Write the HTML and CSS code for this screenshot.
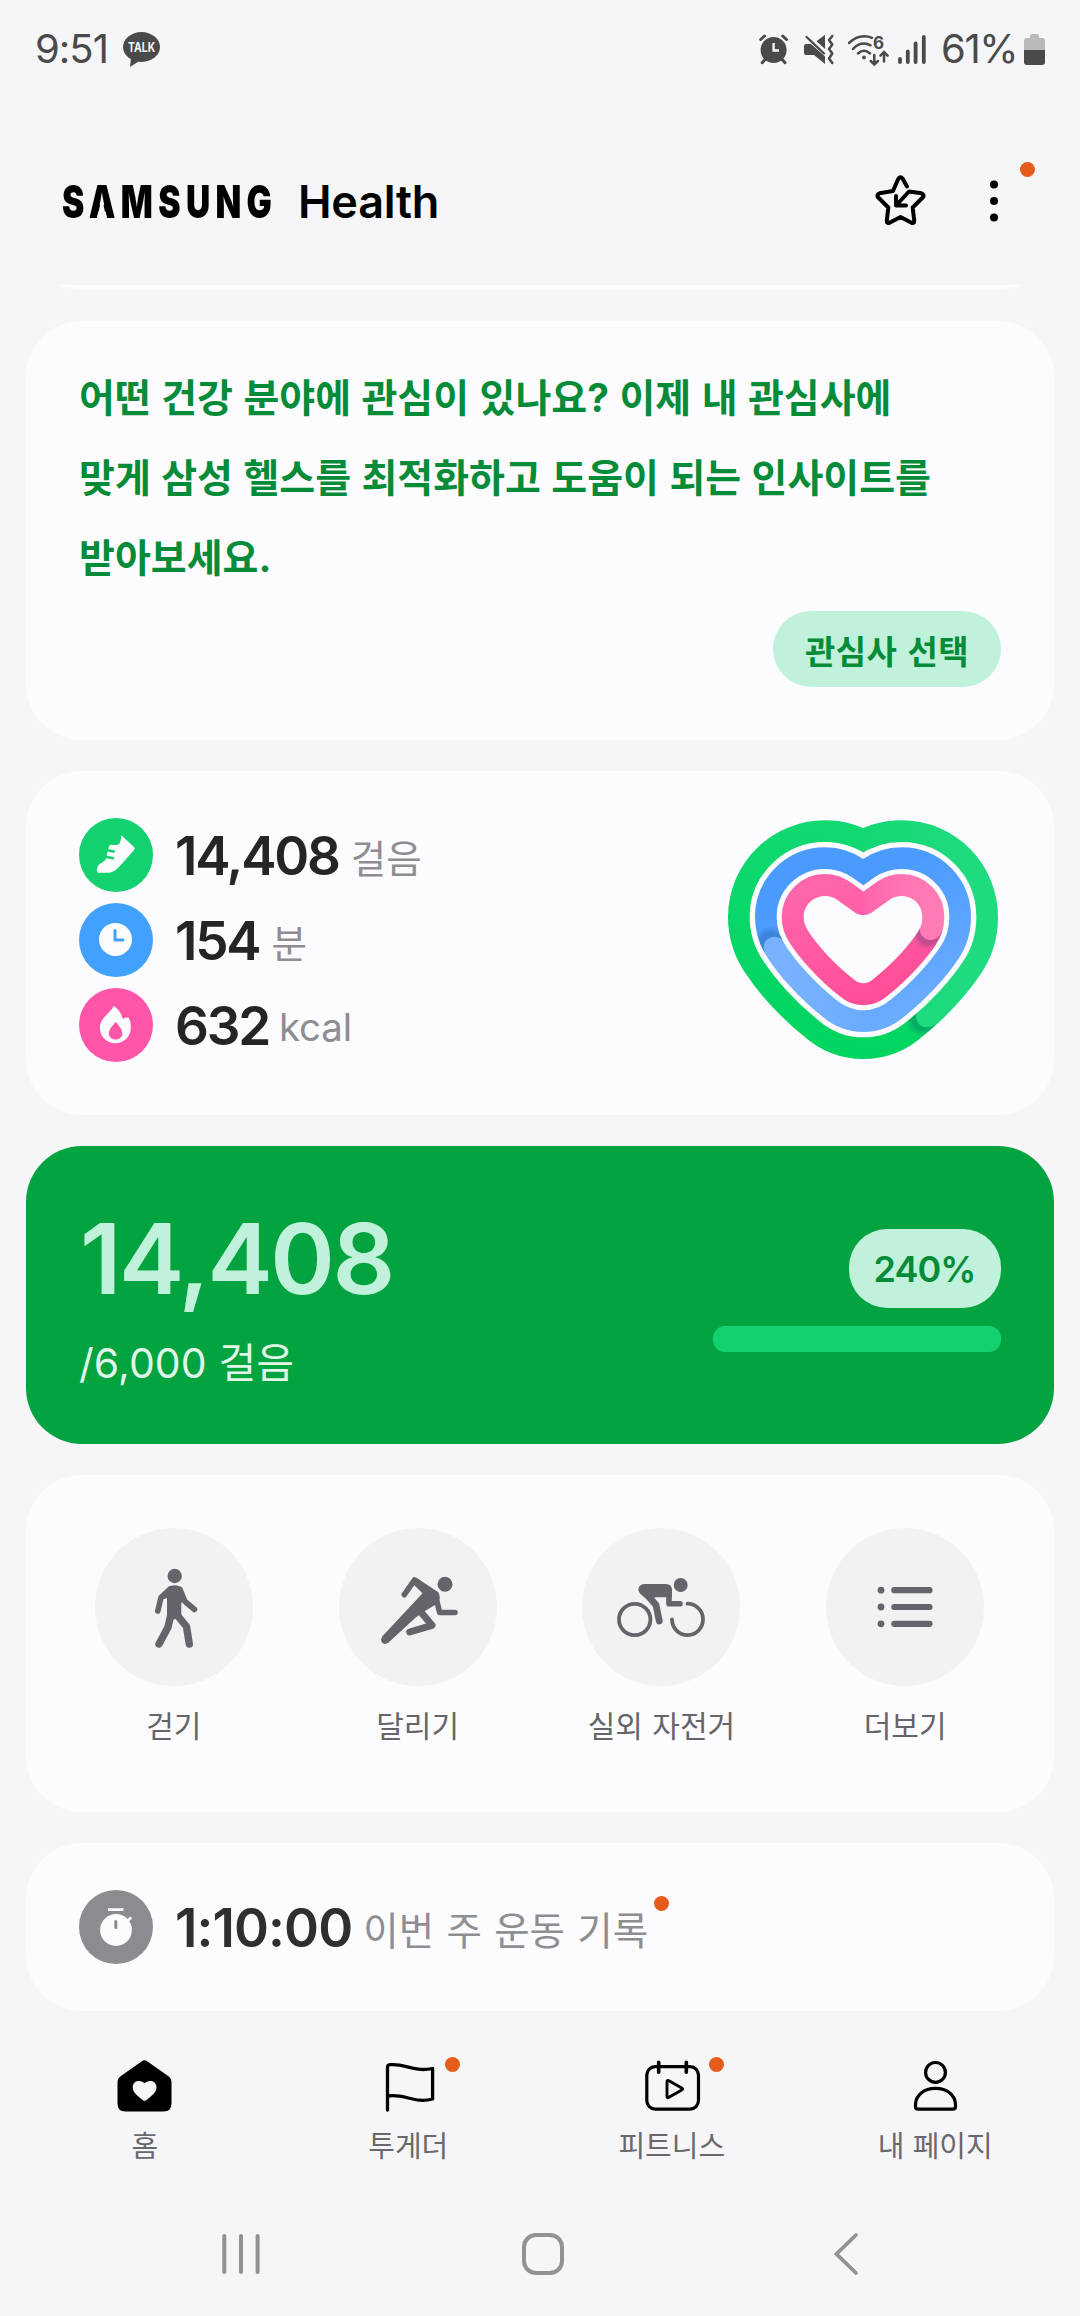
FILE: index.html
```html
<!DOCTYPE html>
<html lang="ko">
<head>
<meta charset="utf-8">
<meta name="viewport" content="width=device-width, initial-scale=1">
<title>Samsung Health</title>
<link rel="stylesheet" href="styles.css">
</head>
<body>
<div class="status-bar">
  <div class="status-left">
    <span class="status-time">9:51</span>
    <svg class="talk" width="37" height="36" viewBox="0 0 37 36">
      <ellipse cx="18.5" cy="15" rx="18.5" ry="15" fill="#4a4a4a"/>
      <path d="M8 26L7 35L17 28.5Z" fill="#4a4a4a"/>
      <text x="18.6" y="20" text-anchor="middle" textLength="27" lengthAdjust="spacingAndGlyphs" class="talk-text">TALK</text>
    </svg>
  </div>
  <div class="status-right">
    <svg class="ico-alarm" width="30" height="31" viewBox="0 0 30 31" fill="none" stroke="#4a4a4a" stroke-width="3" stroke-linecap="round">
      <circle cx="14.6" cy="16" r="13" fill="#4a4a4a" stroke="none"/>
      <path d="M1.7 5.5L5.5 2M27.5 5.5L23.7 2M3.2 28.7L6 25.5M26 28.7L23.2 25.5"/>
      <path d="M14.6 9V16.5H20" stroke="#f6f6f8" stroke-width="2.3" stroke-linecap="butt"/>
    </svg>
    <svg class="ico-mute" width="31" height="31" viewBox="0 0 31 31" fill="#4a4a4a">
      <path d="M2 10H7L21 22.5V30L10 21H2Q0 21 0 19V12Q0 10 2 10Z"/>
      <path d="M12.5 7.3L21 .7V15Z"/>
      <path d="M2.6 3L20 19.5" stroke="#4a4a4a" stroke-width="2.4" stroke-linecap="round"/>
      <path d="M28.3 2L25 6L28.3 10.5L25 15L28.3 19.5L25 24.5L28.3 29" fill="none" stroke="#4a4a4a" stroke-width="2.5" stroke-linecap="round" stroke-linejoin="round"/>
    </svg>
    <svg class="ico-wifi" width="42" height="33" viewBox="0 0 42 33" fill="none" stroke="#4a4a4a" stroke-width="2.5" stroke-linecap="round">
      <path d="M1 9Q8 2.2 16 2.2Q20.5 2.2 24 3.8M5 15Q10 9.6 16 9.6Q19.5 9.6 22.5 11.3M10 19.5Q13 16.8 16 16.8Q19 16.8 22 19.5"/>
      <circle cx="16" cy="23.5" r="1.9" fill="#4a4a4a" stroke="none"/>
      <path d="M26.3 21V30M22.7 27L26.3 30.6L29.9 27M36 27.5V18.5M32.4 21.7L36 18.1L39.6 21.7"/>
      <text x="25" y="15" class="wifi-text">6</text>
    </svg>
    <svg class="ico-signal" width="29" height="31" viewBox="0 0 29 31" stroke="#4a4a4a" stroke-width="3.8" stroke-linecap="round">
      <path d="M2 25V28M9.8 17.5V28M17.6 9.5V28M25.8 3V28"/>
    </svg>
    <span class="status-percent">61%</span>
    <svg class="ico-battery" width="21" height="32" viewBox="0 0 21 32">
      <path d="M6 4V2Q6 0 8 0H13Q15 0 15 2V4H18.5Q21 4 21 7V16H0V7Q0 4 2.500 4Z" fill="#b9b9bb"/>
      <path d="M0 16H21V28Q21 31 18 31H3Q0 31 0 28Z" fill="#4a4a4a"/>
    </svg>
  </div>
</div>

<header class="app-header">
  <h1 class="logo"><span class="brand">S<span class="brand-a">A</span>MSUNG</span><span class="product">Health</span></h1>
  <div class="header-actions">
    <svg width="58" height="58" viewBox="0 0 58 58" fill="none" stroke="#000" stroke-width="4" stroke-linecap="round" stroke-linejoin="round">
      <path d="M35 14.500L30.700 6.800Q28.500 3.600 26.300 6.800L21 19L7.500 21.300Q4 22.500 6.300 25.500L16.300 35.500L14.800 48.500Q14.500 52 17.500 50.800L28.500 45L39.500 50.800Q42.500 52 42.200 48.500L40.700 35.500L50.700 25.500Q53 22.500 49.500 21.300L37 19.500L24.500 33M24 24V33.500H34"/>
    </svg>
    <div class="more">
      <svg width="10" height="44" viewBox="0 0 10 44"><circle cx="5" cy="5.500" r="4"/><circle cx="5" cy="22" r="4"/><circle cx="5" cy="38.500" r="4"/></svg>
      <span class="badge badge-more"></span>
    </div>
  </div>
</header>

<main class="feed">
  <div class="previous-card"></div>

  <section class="card interest">
    <p class="interest-text">어떤 건강 분야에 관심이 있나요? 이제 내 관심사에<br>맞게 삼성 헬스를 최적화하고 도움이 되는 인사이트를<br>받아보세요.</p>
    <button class="interest-button">관심사 선택</button>
  </section>

  <section class="card activity">
    <ul class="stats">
      <li class="stat">
        <svg width="74" height="74" viewBox="0 0 74 74">
          <circle cx="37" cy="37" r="37" fill="#13d16f"/>
          <path d="M42.300 17.300L55.200 29.300Q56.200 30.500 55 32L40.500 48.500Q35 54.800 28 54.800H20Q17.600 54.800 17.800 51.500Q18.500 46.500 23 44.500L26.500 42L28.500 34L30 28.500Q30.300 26.500 32.500 26.800Q39.500 28 41 24.500Q42.300 21.500 42.300 17.300Z" fill="#fcfcfe"/>
          <path d="M28 32.200L34.800 33.500M26.500 38.800L34 40.200" stroke="#13d16f" stroke-width="2.400" stroke-linecap="round"/>
        </svg>
        <span class="value">14,408</span><span class="unit">걸음</span>
      </li>
      <li class="stat">
        <svg width="74" height="74" viewBox="0 0 74 74" fill="none">
          <circle cx="37" cy="37" r="37" fill="#42a0ff"/>
          <circle cx="36.500" cy="36.400" r="16.500" fill="#fcfcfe"/>
          <path d="M36 27.500V37H44" stroke="#42a0ff" stroke-width="3" stroke-linecap="round" stroke-linejoin="round"/>
        </svg>
        <span class="value">154</span><span class="unit">분</span>
      </li>
      <li class="stat">
        <svg width="74" height="74" viewBox="0 0 74 74">
          <circle cx="37" cy="37" r="37" fill="#ff55a8"/>
          <path d="M34.800 18C39 20.500 42.500 25.500 43.800 30.800Q46.500 29.500 49.500 29.500Q51.900 33 51.900 39C51.900 48.500 45 55.200 36.400 55.200C27.800 55.200 20.900 48.500 20.900 40C20.900 30.500 29.500 26.500 34.800 18Z" fill="#fcfcfe"/>
          <path d="M36.700 33.700C40 38 43.300 41 43.300 45.500C43.300 49 40.500 51.500 36.600 51.500C32.700 51.500 29.900 49 29.900 45.500C29.900 41 33.500 38 36.700 33.700Z" fill="#ff55a8"/>
        </svg>
        <span class="value">632</span><span class="unit unit-latin">kcal</span>
      </li>
    </ul>
    <svg class="rings" width="330" height="300" viewBox="0 0 990 900">
      <defs>
        <path id="heart" d="M490 376C482 376 475 374 468 370L411 329C401 322 389 318 375 318C340 318 311 346 311 381C311 396 316 411 326 425C350 462 400 520 460 567C470 576 480 580 490 580C500 580 510 576 520 567C580 520 630 462 654 425C664 411 667 396 667 381C667 346 640 318 605 318C591 318 579 322 569 329L512 370C505 374 498 376 490 376Z" stroke-linejoin="round"/>
        <linearGradient id="g1" gradientUnits="userSpaceOnUse" x1="300" y1="750" x2="450" y2="120"><stop offset="0" stop-color="#00d55f"/><stop offset="1" stop-color="#12d872"/></linearGradient>
        <linearGradient id="g2" gradientUnits="userSpaceOnUse" x1="490" y1="0" x2="800" y2="0"><stop offset="0" stop-color="#13d872"/><stop offset="1" stop-color="#1fdb80"/></linearGradient>
        <linearGradient id="b1" gradientUnits="userSpaceOnUse" x1="340" y1="330" x2="495" y2="726"><stop offset="0" stop-color="#4b9bff"/><stop offset="1" stop-color="#6bacff"/></linearGradient>
        <linearGradient id="b2" gradientUnits="userSpaceOnUse" x1="280" y1="0" x2="490" y2="0"><stop offset="0" stop-color="#77b1ff"/><stop offset="1" stop-color="#6bacff"/></linearGradient>
        <linearGradient id="p1" gradientUnits="userSpaceOnUse" x1="560" y1="600" x2="440" y2="270"><stop offset="0" stop-color="#ff4e98"/><stop offset="1" stop-color="#ff65aa"/></linearGradient>
        <linearGradient id="p2" gradientUnits="userSpaceOnUse" x1="480" y1="0" x2="680" y2="0"><stop offset="0" stop-color="#ff65aa"/><stop offset="1" stop-color="#ff7bb5"/></linearGradient>
        <radialGradient id="shade"><stop offset=".6" stop-color="#003060" stop-opacity=".24"/><stop offset="1" stop-color="#003060" stop-opacity="0"/></radialGradient>
        <clipPath id="cg"><path d="M490 0H990V783H780L683 679L600 590L490 470Z"/></clipPath>
        <clipPath id="cb"><path d="M100 541L222 471L320 415L490 650V900H100Z"/></clipPath>
        <clipPath id="cp"><path d="M490 200H800V444L692 419L600 398L490 420Z"/></clipPath>
        <mask id="mg" maskUnits="userSpaceOnUse" x="0" y="0" width="990" height="900"><use href="#heart" fill="#fff" stroke="#fff" stroke-width="454"/></mask>
        <mask id="mb" maskUnits="userSpaceOnUse" x="0" y="0" width="990" height="900"><use href="#heart" fill="#fff" stroke="#fff" stroke-width="292"/></mask>
        <mask id="mp" maskUnits="userSpaceOnUse" x="0" y="0" width="990" height="900"><use href="#heart" fill="#fff" stroke="#fff" stroke-width="132"/></mask>
      </defs>
      <g mask="url(#mg)">
        <rect width="990" height="900" fill="url(#g1)"/>
        <circle cx="668" cy="688" r="52" fill="url(#shade)"/>
        <rect width="990" height="900" fill="url(#g2)" clip-path="url(#cg)"/>
        <circle cx="681" cy="679" r="33" fill="#1fdb80"/>
      </g>
      <use href="#heart" fill="#fcfcfe" stroke="#fcfcfe" stroke-width="324"/>
      <g mask="url(#mb)">
        <rect width="990" height="900" fill="url(#b1)"/>
        <circle cx="214" cy="460" r="52" fill="url(#shade)"/>
        <rect width="990" height="900" fill="url(#b2)" clip-path="url(#cb)"/>
        <circle cx="223" cy="472" r="32" fill="#77b1ff"/>
      </g>
      <use href="#heart" fill="#fcfcfe" stroke="#fcfcfe" stroke-width="162"/>
      <g mask="url(#mp)">
        <rect width="990" height="900" fill="url(#p1)"/>
        <circle cx="686" cy="430" r="50" fill="url(#shade)"/>
        <rect width="990" height="900" fill="url(#p2)" clip-path="url(#cp)"/>
        <circle cx="692" cy="417" r="33" fill="#ff7bb5"/>
      </g>
      <use href="#heart" fill="#fcfcfe"/>
    </svg>
  </section>

  <section class="card steps">
    <div class="steps-count">
      <div class="steps-value">14,408</div>
      <div class="steps-goal">/6,000 걸음</div>
    </div>
    <div class="steps-progress">
      <div class="steps-percent">240%</div>
      <div class="bar"></div>
    </div>
  </section>

  <section class="card exercises">
    <div class="exercise">
      <svg width="158" height="158" viewBox="0 0 158 158" fill="none" stroke="#65646a" stroke-linecap="round" stroke-linejoin="round">
        <circle cx="79" cy="79" r="79" fill="#f2f2f2" stroke="none"/>
        <circle cx="79.700" cy="48" r="7.200" fill="#65646a" stroke="none"/>
        <path d="M74 59Q76 57.300 79.700 57.300Q85 57.300 87 61L91 71L86.300 75V88L78 92L72 86.500V70L66 72L65 68Z" fill="#65646a" stroke="none"/>
        <path d="M75 61L66 69.500L62.800 83M85 61.500L90 73.500L99.500 81.500" stroke-width="5.600"/>
        <path d="M76 86L73 99.300L64 116M82 87L91.500 98.500L94.300 116" stroke-width="7.400"/>
      </svg>
      <span>걷기</span>
    </div>
    <div class="exercise">
      <svg width="158" height="158" viewBox="0 0 158 158" fill="none" stroke="#65646a" stroke-linecap="round" stroke-linejoin="round">
        <circle cx="79" cy="79" r="79" fill="#f2f2f2" stroke="none"/>
        <circle cx="106" cy="56.300" r="7.500" fill="#65646a" stroke="none"/>
        <path d="M77 49.500L99 64Q101.500 67 100.300 72L98 76L93 78.800L86 83L77 89.300L49 115L42.700 109L83.500 65.300L74 56Z" fill="#65646a" stroke="none"/>
        <path d="M65.300 66.700L75.500 52L80 55M97 70L100.700 84.500H116" stroke-width="5.600"/>
        <path d="M81 83L93 97.300L70.700 104" stroke-width="7"/>
        <path d="M46 112L60 98" stroke-width="7.600"/>
      </svg>
      <span>달리기</span>
    </div>
    <div class="exercise">
      <svg width="158" height="158" viewBox="0 0 158 158" fill="none" stroke="#65646a" stroke-linecap="round" stroke-linejoin="round">
        <circle cx="79" cy="79" r="79" fill="#f2f2f2" stroke="none"/>
        <circle cx="98.700" cy="57" r="7" fill="#65646a" stroke="none"/>
        <circle cx="52.700" cy="91.500" r="15.700" stroke-width="3.800"/>
        <path d="M90 91.500A15.500 15.700 0 1 0 105.500 75.700" stroke-width="3.800"/>
        <path d="M62.500 56H84Q90 56 90 62V69.300H72.500L70 76L58 65.500Q55 61.500 57.500 58.200Q59.500 56 62.500 56Z" fill="#65646a" stroke="none"/>
        <path d="M87 62V75.700H98" stroke-width="5.600"/>
        <path d="M61 62L74 77L77.300 93" stroke-width="6.800"/>
      </svg>
      <span>실외 자전거</span>
    </div>
    <div class="exercise">
      <svg width="158" height="158" viewBox="0 0 158 158" fill="#65646a">
        <circle cx="79" cy="79" r="79" fill="#f2f2f2"/>
        <circle cx="55" cy="62.200" r="3.400"/><circle cx="55" cy="79" r="3.400"/><circle cx="55" cy="95.800" r="3.400"/>
        <path d="M68.300 62.200H103.500M68.300 79H103.500M68.300 95.800H103.500" stroke="#65646a" stroke-width="6.200" stroke-linecap="round"/>
      </svg>
      <span>더보기</span>
    </div>
  </section>

  <section class="card record">
    <svg width="74" height="74" viewBox="0 0 74 74">
      <circle cx="37" cy="37" r="37" fill="#8c8b90"/>
      <circle cx="37" cy="40" r="15.900" fill="#fcfcfe"/>
      <path d="M28.900 19.700H44.500M47 32L52.300 27.500" stroke="#fcfcfe" stroke-width="2.800"/>
      <path d="M36.800 31.500V37.500" stroke="#8c8b90" stroke-width="3" stroke-linecap="round"/>
    </svg>
    <span class="value value-time">1:10:00</span>
    <span class="unit unit-record">이번 주 운동 기록<i class="badge badge-record"></i></span>
  </section>
</main>

<nav class="tabs">
  <a class="tab">
    <svg class="tab-home" width="60" height="60" viewBox="0 0 60 60">
      <path d="M26.500 5.500Q29.500 3.200 32.500 5.500L53.800 20.500Q56.500 22.500 56.500 26V47.500Q56.500 55.500 48.500 55.500H10.500Q2.500 55.500 2.500 47.500V26Q2.500 22.500 5.200 20.500Z"/>
      <path d="M29.600 27.300C27 23.700 17.700 23.500 17.700 31.500C17.700 36.500 23 40.500 28 44.200Q29.600 45.400 31.200 44.200C36.200 40.500 41.500 36.500 41.500 31.500C41.500 23.500 32.200 23.700 29.600 27.300Z" fill="#f6f6f8"/>
    </svg>
    <span>홈</span>
  </a>
  <a class="tab">
    <svg width="60" height="60" viewBox="0 0 60 60" fill="none" stroke="#000" stroke-width="3.300" stroke-linecap="round" stroke-linejoin="round">
      <path d="M9.500 54V11Q9.500 9 12 8.700C27 7 35 16.500 54.600 12.500V43C37 48 27 37.500 10 40"/>
    </svg>
    <i class="badge badge-tab"></i>
    <span>투게더</span>
  </a>
  <a class="tab">
    <svg width="60" height="60" viewBox="0 0 60 60" fill="none" stroke="#000" stroke-width="3.200" stroke-linecap="round" stroke-linejoin="round">
      <rect x="4.800" y="10.600" width="51.700" height="42.500" rx="8.500"/>
      <path d="M16.700 6.300V16.300M44.300 6.300V16.300" stroke-width="3.600"/>
      <path d="M25 26V40.500Q25 42.500 27 41.300L39.700 34Q41.500 33 39.700 32L27 24.700Q25 23.800 25 26Z" stroke-width="2.900"/>
    </svg>
    <i class="badge badge-tab"></i>
    <span>피트니스</span>
  </a>
  <a class="tab">
    <svg width="60" height="60" viewBox="0 0 60 60" fill="none" stroke="#000" stroke-width="3.200" stroke-linejoin="round">
      <circle cx="30.500" cy="16.400" r="9.900"/>
      <path d="M10.500 49C10.500 39 19 32.400 30.500 32.400C42 32.400 50.500 39 50.500 49V50.500Q50.500 53.200 47.800 53.200H13.200Q10.500 53.200 10.500 50.500Z"/>
    </svg>
    <span>내 페이지</span>
  </a>
</nav>

<div class="system-nav">
  <svg width="46" height="46" viewBox="0 0 46 46" fill="none" stroke="#929292" stroke-width="4" stroke-linecap="round"><path d="M6.300 5V41M23 5V41M39.600 5V41"/></svg>
  <svg width="46" height="46" viewBox="0 0 46 46" fill="none" stroke="#929292" stroke-width="4"><rect x="3" y="4" width="38" height="38" rx="12"/></svg>
  <svg width="46" height="46" viewBox="0 0 46 46" fill="none" stroke="#929292" stroke-width="3.800" stroke-linecap="round"><path d="M32 4L12.500 23L32 42"/></svg>
</div>
</body>
</html>
```
FILE: styles.css
```css
* { box-sizing: border-box; }

body {
  margin: 0;
  width: 1080px;
  height: 2316px;
  overflow: hidden;
  display: flex;
  flex-direction: column;
  background: #f6f6f8;
  color: #252525;
  font-family: Inter, "Noto Sans CJK KR", sans-serif;
}

svg { display: block; flex: none; }

/* Status bar */
.status-bar {
  height: 100px;
  padding: 0 35px 0 35px;
  display: flex;
  justify-content: space-between;
}
.status-left, .status-right { display: flex; align-items: flex-start; }
.status-time, .status-percent {
  margin-top: 24px;
  font-size: 40px;
  line-height: 49px;
  font-weight: 380;
  color: #4a4a4a;
  letter-spacing: -1px;
}
.status-time { width: 88px; }
.status-percent { width: 83px; margin-left: 14px; letter-spacing: -1.4px; }
.talk { margin-top: 32px; }
.talk-text { font: 700 12.5px Inter, sans-serif; fill: #f6f6f8; }
.wifi-text { font: 700 17px Inter, sans-serif; fill: #4a4a4a; stroke: none; }
.ico-alarm { margin-top: 34px; }
.ico-mute { margin: 34px 0 0 15px; }
.ico-wifi { margin: 34px 0 0 13px; }
.ico-signal { margin: 34px 0 0 8px; }
.ico-battery { margin-top: 34px; }

/* App header */
.app-header {
  height: 185px;
  padding: 0 80px 0 62px;
  display: flex;
  justify-content: space-between;
}
.logo {
  margin: 77px 0 0;
  display: flex;
  color: #000;
  font-size: 45px;
  line-height: 50px;
}
.brand {
  width: 236px;
  font-weight: 900;
  letter-spacing: 7.2px;
  transform: scaleX(.745);
  transform-origin: left;
}
.brand-a { position: relative; }
.brand-a::after {
  content: "";
  position: absolute;
  left: 11px;
  bottom: 10px;
  width: 13px;
  height: 18px;
  background: #f6f6f8;
  clip-path: polygon(42% 0, 58% 0, 100% 100%, 0 100%);
}
.product { font-weight: 600; letter-spacing: -.2px; }
.header-actions { display: flex; margin-top: 72px; }
.more { position: relative; margin: 7px 0 0 59px; width: 11px; }

.badge {
  position: absolute;
  width: 15px;
  height: 15px;
  border-radius: 50%;
  background: #e65c1a;
}
.badge-more { left: 31px; top: -17px; }

/* Cards */
.feed {
  display: flex;
  flex-direction: column;
  gap: 31px;
  padding: 0 26px;
}
.previous-card {
  height: 5px;
  overflow: hidden;
  display: flex;
  align-items: flex-end;
}
.previous-card::before {
  content: "";
  flex: 1;
  height: 120px;
  border-radius: 56px;
  background: #fcfcfe;
}
.card {
  border-radius: 56px;
  background: #fcfcfe;
}

.interest {
  height: 419px;
  padding: 37px 53px 0;
  display: flex;
  flex-direction: column;
}
.interest-text {
  margin: 0;
  height: 253px;
  font-size: 39px;
  line-height: 80px;
  font-weight: 700;
  color: #068c38;
  word-spacing: 1.2px;
  white-space: nowrap;
}
.interest-button {
  align-self: flex-end;
  width: 228px;
  height: 76px;
  padding: 0;
  border: 0;
  border-radius: 38px;
  background: #c0f1db;
  color: #068c38;
  font: 700 33px/78px "Noto Sans CJK KR", sans-serif;
  letter-spacing: .3px;
  word-spacing: 1px;
}

.activity {
  height: 344px;
  display: flex;
  justify-content: space-between;
}
.stats {
  list-style: none;
  margin: 0;
  padding: 47px 0 0 53px;
  display: flex;
  flex-direction: column;
  gap: 11px;
}
.stat { display: flex; align-items: center; height: 74px; }
.value {
  margin-left: 22px;
  padding-top: 2px;
  font-size: 53px;
  line-height: 74px;
  font-weight: 600;
  letter-spacing: -2.2px;
  color: #252525;
}
.unit {
  margin-left: 12px;
  padding-top: 7px;
  font-size: 38.5px;
  line-height: 74px;
  color: #8e8d92;
}
.unit-latin { margin-left: 10px; padding-top: 3px; letter-spacing: -.2px; }
.rings { margin: 19px 24px 0 0; }

.steps {
  height: 298px;
  padding: 0 53px;
  display: flex;
  justify-content: space-between;
  background: #03a33f;
}
.steps-value {
  margin: 54px 0 0 1px;
  font-size: 98px;
  line-height: 118px;
  font-weight: 600;
  letter-spacing: -2.4px;
  color: #c0f1db;
}
.steps-goal {
  margin-top: 20px;
  font-size: 41px;
  line-height: 50px;
  font-weight: 400;
  letter-spacing: .1px;
  color: #dff6e8;
}
.steps-progress {
  padding-top: 83px;
  display: flex;
  flex-direction: column;
  align-items: flex-end;
  gap: 18px;
}
.steps-percent {
  width: 152px;
  height: 79px;
  padding-right: 1px;
  border-radius: 38px;
  background: #c0f1db;
  color: #068c38;
  font-size: 36px;
  line-height: 80px;
  font-weight: 600;
  letter-spacing: -.9px;
  text-align: center;
}
.bar { width: 288px; height: 26px; border-radius: 12px; background: #13d16f; }

.exercises {
  height: 337px;
  padding: 53px 27px 0 26px;
  display: grid;
  grid-template-columns: repeat(4, 1fr);
}
.exercise {
  display: flex;
  flex-direction: column;
  align-items: center;
  gap: 18px;
  font-size: 30px;
  line-height: 44px;
  word-spacing: 1px;
  color: #65646a;
}

.record {
  height: 168px;
  padding-left: 53px;
  display: flex;
  align-items: center;
}
.value-time { color: #2f2f2f; letter-spacing: -.9px; }
.unit-record { position: relative; margin-left: 11px; word-spacing: 1.5px; }
.badge-record { right: -21px; top: 9px; }

/* Tabs */
.tabs {
  height: 189px;
  padding: 45px 13px 0;
  display: grid;
  grid-template-columns: repeat(4, 1fr);
}
.tab {
  position: relative;
  display: flex;
  flex-direction: column;
  align-items: center;
  gap: 10px;
  font-size: 29px;
  line-height: 42px;
  color: #69686d;
}
.badge-tab { left: calc(50% + 37px); top: 1px; }

.system-nav {
  display: flex;
  justify-content: space-between;
  padding: 31px 210px 0 218px;
}
```
